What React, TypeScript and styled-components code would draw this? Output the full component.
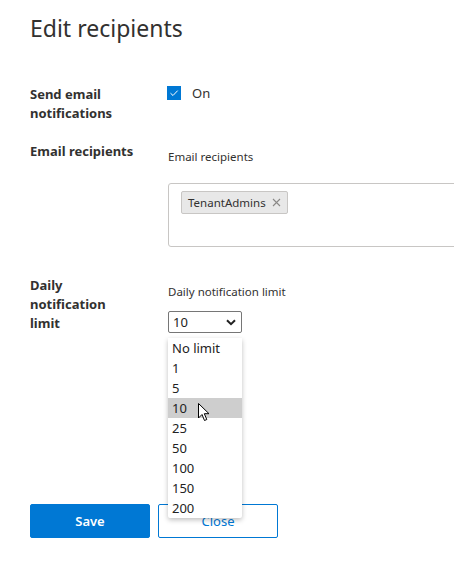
import React from "react";
import styled, { createGlobalStyle } from "styled-components";

const Global = createGlobalStyle`
  html, body { margin: 0; padding: 0; background: #fff; }
  body { font-family: "Segoe UI", "Noto Sans", "Open Sans", sans-serif; color: #323130; }
  * { box-sizing: border-box; }
`;

const Page = styled.div`
  width: 454px;
  height: 571px;
  overflow: hidden;
  padding: 10px 0 0 30px;
  position: relative;
`;

const Title = styled.h1`
  margin: 0;
  font-size: 23px;
  font-weight: 400;
  line-height: 36px;
  color: #323130;
`;

const Row = styled.div<{ $mt: number }>`
  display: grid;
  grid-template-columns: 138px 1fr;
  margin-top: ${(p) => p.$mt}px;
`;

const Label = styled.div<{ $w?: number }>`
  font-size: 13px;
  font-weight: 700;
  line-height: 19px;
  color: #323130;
  width: ${(p) => p.$w ?? 110}px;
`;

const Field = styled.div`
  display: flex;
  flex-direction: column;
  position: relative;
`;

const SmallLabel = styled.div<{ $mt: number }>`
  font-size: 11.5px;
  line-height: 16px;
  color: #323130;
  margin-top: ${(p) => p.$mt}px;
`;

const CheckRow = styled.label`
  display: flex;
  align-items: center;
  gap: 11px;
  font-size: 13px;
  color: #323130;
  margin-top: -1px;
`;

const Box = styled.span`
  width: 14px;
  height: 14px;
  background: #0078d4;
  display: inline-flex;
  align-items: center;
  justify-content: center;
  margin-left: -1px;
`;

const PeopleBox = styled.div`
  margin-top: 18px;
  width: 300px;
  height: 64px;
  border: 1px solid #c8c6c4;
  border-radius: 3px;
  padding: 6px 12px;
`;

const Tag = styled.span`
  display: inline-flex;
  align-items: center;
  gap: 6px;
  height: 23px;
  padding: 0 6px 0 6px;
  background: #e8e8e8;
  border: 1px solid #c8c6c4;
  border-radius: 2px;
  font-size: 11.5px;
  color: #323130;
`;

const Select = styled.div`
  margin-top: 11px;
  width: 74px;
  height: 22px;
  border: 1px solid #767676;
  border-radius: 2px;
  display: flex;
  align-items: center;
  justify-content: space-between;
  padding: 0 5px 0 4px;
  font-size: 13px;
  color: #222;
`;

const List = styled.ul`
  position: absolute;
  top: 62px;
  left: 0;
  width: 74px;
  margin: 0;
  padding: 0;
  list-style: none;
  background: #fff;
  box-shadow: 0 2px 5px rgba(0, 0, 0, 0.25);
  border-radius: 0 0 2px 2px;
  z-index: 2;
`;

const Item = styled.li<{ $active?: boolean }>`
  height: 20px;
  line-height: 20px;
  padding-left: 4px;
  font-size: 13px;
  color: #222;
  background: ${(p) => (p.$active ? "#cecece" : "transparent")};
  position: relative;
`;

const Buttons = styled.div`
  position: absolute;
  top: 504px;
  left: 30px;
  display: flex;
  gap: 8px;
`;

const Button = styled.button<{ $primary?: boolean }>`
  width: 120px;
  height: 34px;
  border-radius: 2px;
  font-family: inherit;
  font-size: 13px;
  font-weight: ${(p) => (p.$primary ? 600 : 400)};
  border: 1px solid #0078d4;
  background: ${(p) => (p.$primary ? "#0078d4" : "#fff")};
  color: ${(p) => (p.$primary ? "#fff" : "#0078d4")};
`;

const Cursor = styled.svg`
  position: absolute;
  left: 30px;
  top: 5px;
`;

const options = ["No limit", "1", "5", "10", "25", "50", "100", "150", "200"];

export default function App() {
  return (
    <>
      <Global />
      <Page>
        <Title>Edit recipients</Title>
        <Row $mt={39}>
          <Label>Send email notifications</Label>
          <Field>
            <CheckRow>
              <Box>
                <svg width="10" height="10" viewBox="0 0 10 10">
                  <path d="M1.5 5.2 L4 7.5 L8.7 2.6" stroke="#fff" strokeWidth="1" fill="none" />
                </svg>
              </Box>
              On
            </CheckRow>
          </Field>
        </Row>
        <Row $mt={19}>
          <Label $w={130}>Email recipients</Label>
          <Field>
            <SmallLabel $mt={7}>Email recipients</SmallLabel>
            <PeopleBox>
              <Tag>
                TenantAdmins
                <svg width="9" height="9" viewBox="0 0 9 9">
                  <path d="M1 1 L8 8 M8 1 L1 8" stroke="#8a8886" strokeWidth="1.1" />
                </svg>
              </Tag>
            </PeopleBox>
          </Field>
        </Row>
        <Row $mt={29}>
          <Label $w={90}>Daily notification limit</Label>
          <Field>
            <SmallLabel $mt={8}>Daily notification limit</SmallLabel>
            <Select>
              10
              <svg width="10" height="7" viewBox="0 0 10 7">
                <path d="M1 1.2 L5 5.2 L9 1.2" stroke="#222" strokeWidth="2" fill="none" />
              </svg>
            </Select>
            <List>
              {options.map((o) => (
                <Item key={o} $active={o === "10"}>
                  {o}
                  {o === "10" && (
                    <Cursor width="12" height="19" viewBox="0 0 12 19">
                      <path
                        d="M0.5 0.5 L0.5 15 L4 11.5 L6.5 17.5 L8.8 16.5 L6.3 10.7 L11 10.7 Z"
                        fill="#fff"
                        stroke="#000"
                        strokeWidth="1"
                      />
                    </Cursor>
                  )}
                </Item>
              ))}
            </List>
          </Field>
        </Row>
        <Buttons>
          <Button $primary>Save</Button>
          <Button>Close</Button>
        </Buttons>
      </Page>
    </>
  );
}
